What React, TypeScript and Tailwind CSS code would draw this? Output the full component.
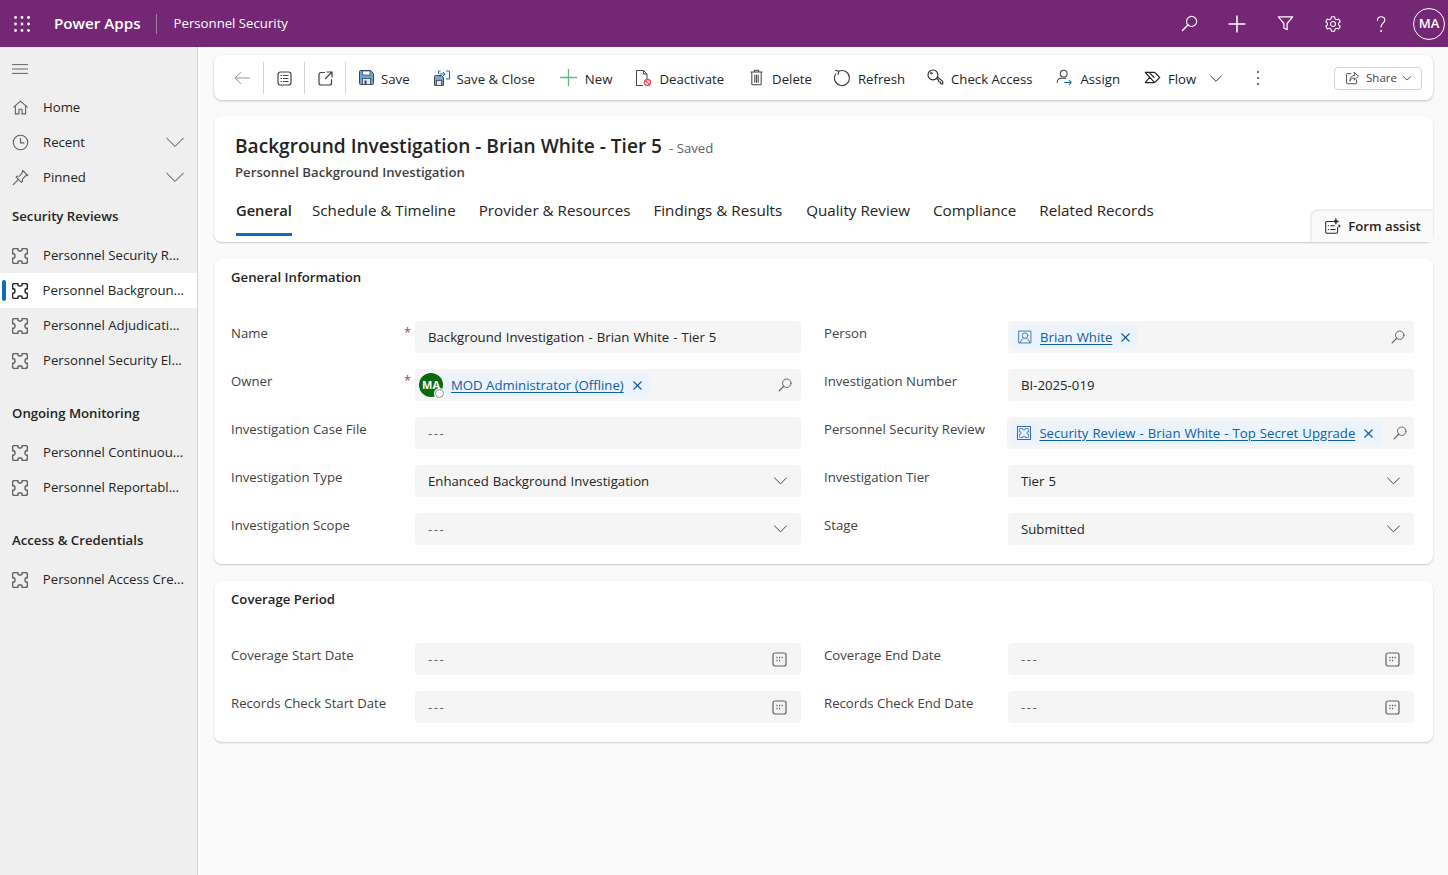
import type { ReactNode } from "react";

const PUZZLE_D =
  "M5 3h3v1q0 1.200 1.200 1.200h1.600q1.200 0 1.200-1.200v-1h3q2 0 2 2v3h-1q-1.200 0-1.200 1.200v1.600q0 1.200 1.200 1.200h1v3q0 2-2 2h-3v-1q0-1.200-1.200-1.200h-1.600q-1.200 0-1.200 1.200v1h-3q-2 0-2-2v-3h1q1.200 0 1.200-1.200v-1.600q0-1.200-1.200-1.200h-1v-3q0-2 2-2z";

function Ico({ size = 16, box = 20, className = "", children }: { size?: number; box?: number; className?: string; children: ReactNode }) {
  return (
    <svg width={size} height={size} viewBox={`0 0 ${box} ${box}`} fill="none" stroke="currentColor" strokeWidth={1} strokeLinecap="round" strokeLinejoin="round" className={`shrink-0 ${className}`}>
      {children}
    </svg>
  );
}

const Search = ({ className = "", size = 16 }: { className?: string; size?: number }) => (
  <Ico size={size} className={className}>
    <circle cx="12.200" cy="7.800" r="5.300" strokeWidth={1.200} />
    <path d="M8.400 11.600 2.600 17.400" strokeWidth={1.500} />
  </Ico>
);

const Puzzle = ({ className = "" }: { className?: string }) => (
  <svg width="16" height="16" viewBox="2.500 2.500 15 15" fill="none" stroke="currentColor" strokeWidth={1.400} className={`shrink-0 ${className}`}>
    <path d={PUZZLE_D} />
  </svg>
);

const Calendar = () => (
  <Ico size={15} box={15} className="text-[#616161]">
    <rect x="1" y="1" width="13" height="13" rx="2" strokeWidth={1.200} />
    <path d="M4.400 5.500h1.200M7 5.500h1.200M9.600 5.500h1.200M4.400 8.600h1.200M7 8.600h1.200" strokeWidth={1.500} strokeLinecap="butt" />
  </Ico>
);

// thin fluent style chevron, width in px
const Chevron = ({ w = 12, className = "" }: { w?: number; className?: string }) => (
  <svg width={w} height={w * 0.6} viewBox="0 0 20 12" fill="none" stroke="currentColor" strokeWidth={20 / w} className={`shrink-0 ${className}`}>
    <path d="M.500 1 10 10.500 19.500 1" />
  </svg>
);

const Cross = ({ className = "" }: { className?: string }) => (
  <svg width="9" height="9" viewBox="0 0 9 9" stroke="currentColor" strokeWidth={1.200} className={`shrink-0 ${className}`}>
    <path d="M.500.500l8 8M8.500.500l-8 8" />
  </svg>
);

function NavRow({ icon, label, chevron, active }: { icon: ReactNode; label: string; chevron?: boolean; active?: boolean }) {
  return (
    <div className={`relative flex h-[35px] items-center pl-3 pr-[13px] text-[#242424] ${active ? "bg-white" : ""}`}>
      {active && <span className="absolute left-[2px] top-[7px] h-[21px] w-1 rounded-sm bg-[#0f6cbd]" />}
      <span className={`flex w-[31px] ${active ? "text-[#242424]" : "text-[#616161]"}`}>{icon}</span>
      <span className="flex-1 whitespace-nowrap">{label}</span>
      {chevron && <Chevron w={18} className="text-[#424242]" />}
    </div>
  );
}

function NavTitle({ children, className }: { children: ReactNode; className: string }) {
  return <div className={`px-3 font-semibold leading-5 text-[#242424] ${className}`}>{children}</div>;
}

function Cmd({ icon, label, className = "" }: { icon: ReactNode; label: string; className?: string }) {
  return (
    <div className={`flex items-center whitespace-nowrap text-[#242424] ${className}`}>
      {icon}
      <span className="ml-[7px] pt-[4px]">{label}</span>
    </div>
  );
}

const Sep = () => <span className="block h-8 w-px bg-[#d6d6d6]" />;

function Tag({ icon, label, className }: { icon: ReactNode; label: string; className: string }) {
  return (
    <div className={`flex h-6 items-center rounded-[4px] bg-[#ebf3fc] ${className}`}>
      {icon}
      <span className="whitespace-nowrap pt-px text-[#115ea3] underline underline-offset-2 [word-spacing:0.6px]">{label}</span>
      <Cross className="ml-[9px] text-[#115ea3]" />
    </div>
  );
}

function Field({ label, required, wide, children, className = "" }: { label: string; required?: boolean; wide?: boolean; children: ReactNode; className?: string }) {
  return (
    <div className="flex h-8">
      <div className="relative w-[184px] whitespace-nowrap pt-[2px] leading-5 text-[#424242]">
        {label}
        {required && <span className="absolute left-[173px] top-[1px] text-[13px] text-[#c4314b]">*</span>}
      </div>
      <div className={`flex h-8 items-center rounded-[4px] bg-[#f5f5f5] text-[#242424] ${wide ? "w-[408px]" : "flex-1"} ${className}`}>{children}</div>
    </div>
  );
}

const Empty = () => <span className="flex-1 pl-[13px] pt-[2px] tracking-[1.500px] text-[#616161]">---</span>;
const Val = ({ children }: { children: ReactNode }) => <span className="flex-1 pl-[13px] pt-[1px] [word-spacing:0.6px]">{children}</span>;
const Chev = () => <Chevron w={13} className="mr-[14px] text-[#424242]" />;

function Section({ title, children }: { title: string; children: ReactNode }) {
  return (
    <section className="rounded-lg bg-white pb-[19px] pl-[17px] pr-[19px] pt-2 shadow-[0_1px_2px_rgba(0,0,0,0.2)]">
      <h2 className="mb-[34px] font-semibold leading-5 text-[#242424]">{title}</h2>
      <div className="grid grid-cols-[570px_590px] gap-x-[23px] gap-y-4">{children}</div>
    </section>
  );
}

export default function App() {
  return (
    <div className="flex h-[875px] flex-col overflow-hidden bg-[#fafafa] text-[13.200px] [font-family:'Open_Sans',sans-serif]">
      <header className="flex h-[47px] shrink-0 items-center bg-[#742774] text-white">
        <svg width="16" height="16" viewBox="0 0 16 16" fill="currentColor" className="ml-[14px]">
          {[1.500, 8, 14.500].flatMap((y) => [1.500, 8, 14.500].map((x) => <circle key={`${x}-${y}`} cx={x} cy={y} r="1.400" />))}
        </svg>
        <span className="ml-6 text-[15.200px] font-semibold">Power Apps</span>
        <span className="ml-[15px] h-[20px] w-px bg-[#a878a8]" />
        <span className="ml-[17px]">Personnel Security</span>
        <div className="ml-auto flex items-center pr-[3px]">
          <span className="flex w-12 justify-center"><Search size={19} /></span>
          <span className="flex w-12 justify-center">
            <Ico size={18} box={18}><path d="M9 .500v17M.500 9h17" strokeWidth={1.500} strokeLinecap="butt" /></Ico>
          </span>
          <span className="flex w-12 justify-center">
            <Ico size={19}><path d="M2.500 3h15l-5.800 7v6.500l-3.400-1.800V10z" strokeWidth={1.300} /></Ico>
          </span>
          <span className="flex w-12 justify-center">
            <Ico size={18}>
              <path d="M8.300 2h3.400l.6 2.400 1.700.9 2.300-.8 1.700 3-1.800 1.600v1.800l1.800 1.600-1.700 3-2.300-.8-1.700.9-.6 2.400H8.300l-.6-2.400-1.700-.9-2.300.8-1.700-3 1.800-1.600V9.100L2 7.500l1.700-3 2.300.8 1.700-.9z" strokeWidth={1.200} />
              <circle cx="10" cy="10" r="2.700" strokeWidth={1.200} />
            </Ico>
          </span>
          <span className="flex w-12 justify-center">
            <Ico size={20}><path d="M6.500 6.300C6.500 1.600 13.800 1.600 13.800 6c0 3-3.800 3.400-3.800 7" strokeWidth={1.200} /><circle cx="10" cy="17" r=".5" fill="currentColor" /></Ico>
          </span>
          <span className="ml-[8px] flex h-8 w-8 items-center justify-center rounded-full border border-white text-[13px] font-semibold">MA</span>
        </div>
      </header>

      <div className="flex min-h-0 flex-1">
        <aside className="w-[198px] shrink-0 border-r border-[#d1d1d1] bg-[#efefef]">
          <div className="flex h-[43px] items-center pl-3 text-[#424242]">
            <Ico size={16}><path d="M0 4.500h20M0 10h20M0 15.500h20" strokeLinecap="butt" /></Ico>
          </div>
          <NavRow label="Home" icon={<Ico size={17}><path d="M2 9.500 10 2.500l8 7M4 8v9.500h4.200V12h3.600v5.500H16V8" strokeWidth={1.300} /></Ico>} />
          <NavRow label="Recent" chevron icon={<Ico size={17}><circle cx="10" cy="10" r="8.500" strokeWidth={1.300} /><path d="M10 5v5.500h4" strokeWidth={1.300} /></Ico>} />
          <NavRow label="Pinned" chevron icon={<Ico size={17}><path d="M1.500 18.500 7.500 12.500M12.500 1.500l6 6-2.500.5-3.500 3.500-.3 3.300-1 1L4.800 9.500l1-1 3.300-.3L12 4.500z" strokeWidth={1.300} /></Ico>} />
          <NavTitle className="pb-3 pt-[11px]">Security Reviews</NavTitle>
          <NavRow label="Personnel Security R..." icon={<Puzzle />} />
          <NavRow label="Personnel Backgroun..." active icon={<Puzzle />} />
          <NavRow label="Personnel Adjudicati..." icon={<Puzzle />} />
          <NavRow label="Personnel Security El..." icon={<Puzzle />} />
          <NavTitle className="pb-3 pt-[25px]">Ongoing Monitoring</NavTitle>
          <NavRow label="Personnel Continuou..." icon={<Puzzle />} />
          <NavRow label="Personnel Reportabl..." icon={<Puzzle />} />
          <NavTitle className="pb-3 pt-[25px]">Access &amp; Credentials</NavTitle>
          <NavRow label="Personnel Access Cre..." icon={<Puzzle />} />
        </aside>

        <main className="flex min-w-0 flex-1 flex-col gap-4 pl-4 pr-[15px] pt-2">
          <div className="flex h-[45px] shrink-0 items-center rounded-lg bg-white pl-5 pr-[11px] pt-px shadow-[0_1px_3px_rgba(0,0,0,0.22)]">
            <Ico size={16} className="text-[#8f8f8f]"><path d="M19 10H1.500M8.500 3 1.500 10l7 7" strokeWidth={1.200} /></Ico>
            <span className="mx-[13px]"><Sep /></span>
            <Ico size={15} box={15} className="text-[#424242]">
              <rect x="1" y="1" width="13" height="13" rx="2.500" strokeWidth={1.200} />
              <path d="M4 4.500h.5M4 7.500h.5M4 10.500h.5M6.500 4.500H11M6.500 7.500H11M6.500 10.500H11" strokeWidth={1.200} />
            </Ico>
            <span className="ml-[12px] mr-[13px]"><Sep /></span>
            <Ico size={15} box={15} className="text-[#424242]">
              <path d="M6.500 1.500H3A2 2 0 0 0 1 3.500v8.500a2 2 0 0 0 2 2h8.500a2 2 0 0 0 2-2V8.500M9 1h5v5M14 1 7.500 7.500" strokeWidth={1.200} />
            </Ico>
            <span className="ml-[12px] mr-[13px]"><Sep /></span>
            <Cmd
              label="Save"
              icon={
                <svg width="15" height="15" viewBox="0 0 15 15" className="shrink-0">
                  <path d="M.5 1.500a1 1 0 0 1 1-1h10l3 3v10a1 1 0 0 1-1 1h-12a1 1 0 0 1-1-1z" fill="#6aa5d8" stroke="#37465a" />
                  <rect x="3.500" y="1" width="7.500" height="4" fill="#fff" stroke="#37465a" strokeWidth=".7" />
                  <rect x="3.500" y="8.500" width="8" height="6" fill="#e8e8e8" stroke="#37465a" strokeWidth=".8" />
                  <rect x="5.500" y="10.500" width="2" height="3.500" fill="#37465a" />
                </svg>
              }
            />
            <Cmd
              className="ml-[24px]"
              label="Save & Close"
              icon={
                <svg width="16" height="16" viewBox="0 0 16 16" fill="none" className="shrink-0">
                  <path d="M.5 6.500a1 1 0 0 1 1-1h6l2 2v7.500a.5.5 0 0 1-.5.5H1a.5.5 0 0 1-.5-.5z" fill="#7fa4c4" stroke="#37465a" />
                  <rect x="2.500" y="10.500" width="5" height="5" fill="#e8e8e8" stroke="#37465a" strokeWidth=".8" />
                  <path d="M6.500 1h-2v3M12 1h3.500v8H12M5.500 4H11M9 2l2.200 2L9 6" stroke="#0f6cbd" />
                </svg>
              }
            />
            <Cmd
              className="ml-[24px]"
              label="New"
              icon={
                <svg width="19" height="19" viewBox="0 0 19 19" stroke="#5dbb7a" strokeWidth={1.300} className="shrink-0">
                  <path d="M9.500 1v17M1 9.500h17" />
                </svg>
              }
            />
            <Cmd
              className="ml-[23px]"
              label="Deactivate"
              icon={
                <svg width="17" height="18" viewBox="0 0 17 18" fill="none" className="shrink-0">
                  <path d="M8 16.500H1.500v-15h7l3.500 3.500v5M8.500 1.500V5H12" stroke="#424242" />
                  <circle cx="12.500" cy="13.500" r="3" stroke="#e8485a" strokeWidth="1.300" fill="#fff" />
                  <path d="m10.500 11.500 4 4" stroke="#e8485a" strokeWidth="1.300" />
                </svg>
              }
            />
            <Cmd
              className="ml-[24px]"
              label="Delete"
              icon={
                <Ico size={17} className="text-[#424242]">
                  <path d="M3.500 3.500h13M7.500 3.500v-2h5v2M4.500 3.500v14a1 1 0 0 0 1 1h9a1 1 0 0 0 1-1v-14M8 7v8.500M10 7v8.500M12 7v8.500" strokeWidth={1.200} />
                </Ico>
              }
            />
            <Cmd
              className="ml-[21px]"
              label="Refresh"
              icon={
                <Ico size={18} className="text-[#424242]">
                  <path d="M6.500 2.500A8.300 8.300 0 1 1 3 5.500" strokeWidth={1.300} />
                  <path d="M3 1.500l3.500 1-.8 3.500" strokeWidth={1.300} />
                </Ico>
              }
            />
            <Cmd
              className="ml-[22px]"
              label="Check Access"
              icon={
                <Ico size={17} className="text-[#242424]">
                  <circle cx="7" cy="7" r="5.800" strokeWidth={1.300} />
                  <circle cx="5" cy="5" r="1" />
                  <path d="M11 11l2.500 2 .3 2 2 .3.4 2 2.300.2v-3L12.500 9.500" strokeWidth={1.300} />
                </Ico>
              }
            />
            <Cmd
              className="ml-[24px]"
              label="Assign"
              icon={
                <Ico size={17} className="text-[#424242]">
                  <circle cx="9" cy="5.500" r="4" strokeWidth={1.200} />
                  <path d="M1.500 16c0-3.500 2.500-5 5-5h5" strokeWidth={1.200} />
                  <path d="M10 16h8M15.500 13.500 18 16l-2.500 2.500" stroke="#0f6cbd" strokeWidth={1.200} />
                </Ico>
              }
            />
            <Cmd
              className="ml-[24px]"
              label="Flow"
              icon={
                <Ico size={17} className="text-[#242424]">
                  <path d="M1.500 4h11l6 6-6 6h-11l5-6zM1.500 4l11 12M6 4l6 6" strokeWidth={1.300} />
                </Ico>
              }
            />
            <Chevron w={12} className="ml-[14px] mt-px text-[#424242]" />
            <span className="ml-[35px] flex flex-col gap-[4px]">
              <span className="h-[2px] w-[2px] rounded-full bg-[#424242]" />
              <span className="h-[2px] w-[2px] rounded-full bg-[#424242]" />
              <span className="h-[2px] w-[2px] rounded-full bg-[#424242]" />
            </span>
            <button className="ml-auto flex h-[23px] w-[88px] items-center justify-center rounded border border-[#d1d1d1] text-[11.500px] text-[#424242]">
              <Ico size={15} className="mr-[6px]"><path d="M8 3.500H3A1 1 0 0 0 2 4.500V16a1 1 0 0 0 1 1h11.500a1 1 0 0 0 1-1v-4M12.500 2 18 7l-5.500 5V9.300C9 9.300 7.500 11 6.500 13.500c0-5 2.500-7.500 6-7.800z" strokeWidth={1.200} /></Ico>
              Share
              <Chevron w={8} className="ml-[6px]" />
            </button>
          </div>

          <div className="flex h-[126px] shrink-0 flex-col rounded-lg bg-white shadow-[0_1px_2px_rgba(0,0,0,0.2)]">
            <div className="flex items-baseline pl-[21px] pt-[17px]">
              <span className="text-[19.100px] font-semibold leading-[26px] text-[#242424]">Background Investigation - Brian White - Tier 5</span>
              <span className="ml-[7px] text-[#616161]">- Saved</span>
            </div>
            <div className="pl-[21px] pt-[3px] font-semibold leading-5 text-[#424242]">Personnel Background Investigation</div>
            <div className="mt-auto flex items-end pl-[22px]">
              <div className="mb-[6px] flex items-start gap-[23px] text-[15.200px] leading-5 text-[#242424]">
                <span className="-mr-[3px] w-[56px] whitespace-nowrap border-b-[3px] border-[#0f6cbd] pb-[13px] text-[14.700px] font-semibold">General</span>
                <span>Schedule &amp; Timeline</span>
                <span>Provider &amp; Resources</span>
                <span className="mr-[1px]">Findings &amp; Results</span>
                <span>Quality Review</span>
                <span>Compliance</span>
                <span>Related Records</span>
              </div>
              <div className="ml-auto flex h-[33px] w-[123px] items-center justify-center gap-[7px] rounded-tl-lg border-l-2 border-t-2 border-[#eeeeee] bg-[#fafafa] font-semibold text-[#242424]">
                <Ico size={17}>
                  <path d="M10 4H3.500a1.500 1.500 0 0 0-1.500 1.500v11A1.500 1.500 0 0 0 3.500 18h11a1.500 1.500 0 0 0 1.500-1.500V11" strokeWidth={1.200} />
                  <path d="M5 9h.5M5 13.500h.5M8 9h4M8 13.500h5" strokeWidth={1.200} />
                  <path d="M14 .5l1 2.500 2.500 1-2.500 1-1 2.500-1-2.500-2.500-1 2.500-1zM18 8l.5 1.200 1 .3-1 .5-.5 1-.5-1-1-.5 1-.3z" fill="currentColor" strokeWidth={.5} />
                </Ico>
                Form assist
              </div>
            </div>
          </div>

          <div className="mt-px flex flex-col gap-[17px]">
            <Section title="General Information">
              <Field label="Name" required><Val>Background Investigation - Brian White - Tier 5</Val></Field>
              <Field label="Person">
                <Tag
                  className="ml-1 pl-[6px] pr-2"
                  label="Brian White"
                  icon={
                    <Ico size={14} className="mr-2 text-[#3b6ea8]">
                      <rect x="1.500" y="1.500" width="17" height="17" strokeWidth={1.300} />
                      <circle cx="10" cy="8" r="4" strokeWidth={1.300} />
                      <path d="M3.500 18c0-3 2-5 4-6M16.500 18c0-3-2-5-4-6" strokeWidth={1.300} />
                    </Ico>
                  }
                />
                <Search className="ml-auto mr-2 text-[#616161]" />
              </Field>
              <Field label="Owner" required>
                <div className="relative ml-1 flex h-6 w-[232px] items-center rounded-full bg-[#ebf3fc] pl-8 pr-2">
                  <span className="absolute left-0 top-0 flex h-6 w-6 items-center justify-center rounded-full bg-[#0b6a0b] text-[11px] font-bold text-white">MA</span>
                  <span className="absolute left-[16px] top-[16px] h-[9px] w-[9px] rounded-full border border-[#8a8a8a] bg-white ring-1 ring-white" />
                  <span className="whitespace-nowrap pt-px text-[#115ea3] underline underline-offset-2">MOD Administrator (Offline)</span>
                  <Cross className="ml-[9px] text-[#115ea3]" />
                </div>
                <Search className="ml-auto mr-2 text-[#616161]" />
              </Field>
              <Field label="Investigation Number"><Val>BI-2025-019</Val></Field>
              <Field label="Investigation Case File"><Empty /></Field>
              <Field label="Personnel Security Review" wide>
                <Tag
                  className="ml-1 pl-[6px] pr-[8px]"
                  label="Security Review - Brian White - Top Secret Upgrade"
                  icon={
                    <span className="mr-2 flex h-[14px] w-[14px] shrink-0 items-center justify-center border border-[#3b6ea8] text-[#3b6ea8]">
                      <svg width="10" height="10" viewBox="2.500 2.500 15 15" fill="none" stroke="currentColor" strokeWidth={1.500}><path d={PUZZLE_D} /></svg>
                    </span>
                  }
                />
                <Search className="ml-auto mr-[6px] text-[#616161]" />
              </Field>
              <Field label="Investigation Type"><Val>Enhanced Background Investigation</Val><Chev /></Field>
              <Field label="Investigation Tier"><Val>Tier 5</Val><Chev /></Field>
              <Field label="Investigation Scope"><Empty /><Chev /></Field>
              <Field label="Stage"><Val>Submitted</Val><Chev /></Field>
            </Section>
            <Section title="Coverage Period">
              <Field label="Coverage Start Date" className="pr-[14px]"><Empty /><Calendar /></Field>
              <Field label="Coverage End Date" className="pr-[14px]"><Empty /><Calendar /></Field>
              <Field label="Records Check Start Date" className="pr-[14px]"><Empty /><Calendar /></Field>
              <Field label="Records Check End Date" className="pr-[14px]"><Empty /><Calendar /></Field>
            </Section>
          </div>
        </main>
      </div>
    </div>
  );
}
